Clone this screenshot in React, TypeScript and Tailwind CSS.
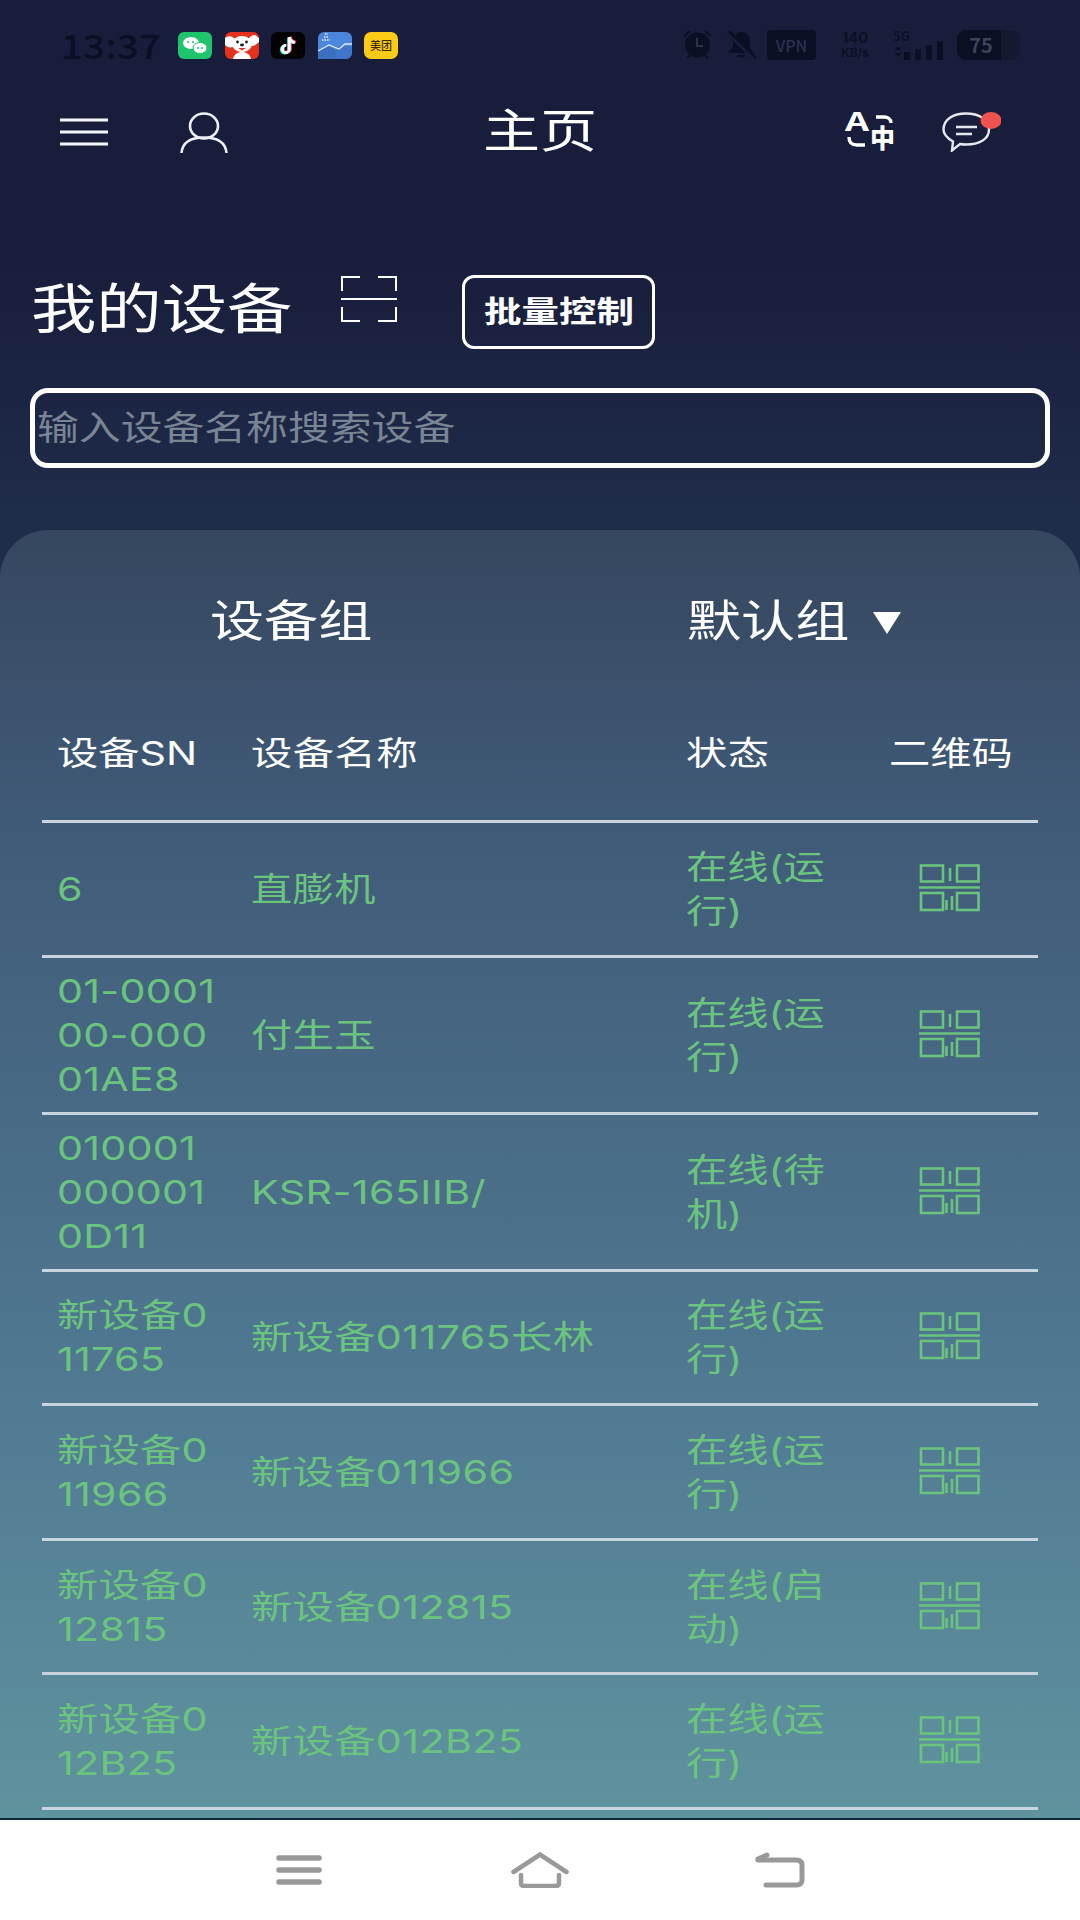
import React from "react";

const FONT = "font-['Noto_Sans_CJK_SC','Noto_Sans',sans-serif]";

function T({ children, className = "scale-x-[1.25]" }: { children: React.ReactNode; className?: string }) {
  return <span className={"inline-block origin-left whitespace-nowrap " + className}>{children}</span>;
}

function Qr() {
  return (
    <svg width="61" height="48" viewBox="0 0 61 48" fill="none" stroke="#6ac47e" strokeWidth="2.600">
      <rect x="2" y="1.500" width="22" height="16" />
      <path d="M31 4v13" />
      <rect x="38" y="1.500" width="21.500" height="16" />
      <path d="M0 23.500h61" />
      <rect x="2" y="29" width="22" height="17" />
      <path d="M27.500 36v10M33 32v14" />
      <rect x="38" y="29" width="21.500" height="17" />
    </svg>
  );
}

const rows: { sn: string[]; name: string; st: string[] }[] = [
  { sn: ["6"], name: "直膨机", st: ["在线(运", "行)"] },
  { sn: ["01-0001", "00-000", "01AE8"], name: "付生玉", st: ["在线(运", "行)"] },
  { sn: ["010001", "000001", "0D11"], name: "KSR-165IIB/", st: ["在线(待", "机)"] },
  { sn: ["新设备0", "11765"], name: "新设备011765长林", st: ["在线(运", "行)"] },
  { sn: ["新设备0", "11966"], name: "新设备011966", st: ["在线(运", "行)"] },
  { sn: ["新设备0", "12815"], name: "新设备012815", st: ["在线(启", "动)"] },
  { sn: ["新设备0", "12B25"], name: "新设备012B25", st: ["在线(运", "行)"] },
];

function Lines({ lines, className }: { lines: string[]; className?: string }) {
  return (
    <div className="flex flex-col">
      {lines.map((l, i) => (
        <div key={i} className="h-[44px]">
          <T className={className}>{l}</T>
        </div>
      ))}
    </div>
  );
}

function StatusBar() {
  return (
    <div className="flex h-[90px] items-center pl-[61px] pr-[60px] text-[#0b0f24]">
      <div className="w-[117px] text-[34px] font-medium leading-none">
        <T className="scale-x-[1.14] text-[#0b0f24]">13:37</T>
      </div>
      <div className="flex gap-[12.5px]">
        <svg width="34" height="27" viewBox="0 0 34 27">
          <rect width="34" height="27" rx="6" fill="#1fc46c" />
          <ellipse cx="13" cy="11" rx="8" ry="6" fill="#fff" />
          <ellipse cx="22" cy="16" rx="7" ry="5.500" fill="#fff" stroke="#1fc46c" />
          <circle cx="10" cy="10" r="1" fill="#1fc46c" />
          <circle cx="15" cy="10" r="1" fill="#1fc46c" />
          <circle cx="20" cy="16" r="1" fill="#1fc46c" />
          <circle cx="24" cy="16" r="1" fill="#1fc46c" />
        </svg>
        <svg width="34" height="27" viewBox="0 0 34 27">
          <rect width="34" height="27" rx="6" fill="#e5321f" />
          <path d="M0 6c4-3 8-2 10 2l-2 7c-3 1-6 0-8-2z" fill="#fff" />
          <path d="M30 3c-3 0-6 2-7 5l3 6c3 0 6-2 8-4V6z" fill="#fff" />
          <ellipse cx="17" cy="12" rx="10" ry="8" fill="#fff" />
          <path d="M8 27c1-5 5-7 9-7s8 2 9 7z" fill="#fff" />
          <circle cx="12.500" cy="10" r="1.400" fill="#222" />
          <circle cx="21.500" cy="10" r="1.400" fill="#222" />
          <ellipse cx="17" cy="13" rx="2" ry="1.400" fill="#222" />
          <path d="M13 16h8l-4 2.500z" fill="#e5321f" />
        </svg>
        <svg width="34" height="27" viewBox="0 0 34 27">
          <rect width="34" height="27" rx="6" fill="#020204" />
          <path d="M18.500 5v12a3.600 3.600 0 1 1-3.600-3.600M18.500 5c.4 3 2.500 5 5.500 5.300" fill="none" stroke="#25f4ee" strokeWidth="2.800" transform="translate(-1 .6)" />
          <path d="M18.500 5v12a3.600 3.600 0 1 1-3.600-3.600M18.500 5c.4 3 2.500 5 5.500 5.300" fill="none" stroke="#fe2c55" strokeWidth="2.800" transform="translate(1 -.2)" />
          <path d="M18.500 5v12a3.600 3.600 0 1 1-3.600-3.600M18.500 5c.4 3 2.500 5 5.500 5.300" fill="none" stroke="#fff" strokeWidth="2.800" />
        </svg>
        <svg width="34" height="27" viewBox="0 0 34 27">
          <rect width="34" height="27" rx="6" fill="#4a86dc" />
          <path d="M0 27V19l11-5 7 4V27z" fill="#3c6fc0" />
          <path d="M18 18l4-4 12 0V21a6 6 0 0 1-6 6H18z" fill="#3c6fc0" opacity=".7" />
          <path d="M0 18l11-6 10 4 6-5 7 0" transform="translate(0 1)" fill="none" stroke="#dce9fa" strokeWidth="1.300" />
          <path d="M4 8h8M6 5h5M7 2h3" stroke="#e8f0fb" strokeWidth="1.500" strokeDasharray="1.500 1" />
        </svg>
        <div className="flex h-[27px] w-[34px] items-center justify-center rounded-[7px] bg-[#fdcb17] text-[11px] font-medium leading-none text-[#3a2c00]">
          美团
        </div>
      </div>
      <div className="ml-auto flex items-center">
        <svg width="33" height="30" viewBox="0 0 33 30" className="mr-[12px]">
          <circle cx="16.500" cy="15" r="12.500" fill="#0b0f24" />
          <path d="M3 6l6-5M30 6l-6-5M6 28l3-3M27 28l-3-3" stroke="#0b0f24" strokeWidth="2" />
          <path d="M16 8v8h6" stroke="#2a2f4a" strokeWidth="2" fill="none" />
        </svg>
        <svg width="31" height="30" viewBox="0 0 31 30" className="mr-[10px]">
          <path d="M15 2c6 0 9 4 9 9v7l4 5H2l5-6v-6c0-5 3-9 8-9z" fill="#0b0f24" />
          <path d="M11 26h8" stroke="#0b0f24" strokeWidth="2.500" />
          <path d="M2 2l27 27" stroke="#181d3b" strokeWidth="5" />
          <path d="M3 1l27 27" stroke="#0b0f24" strokeWidth="2.500" />
        </svg>
        <div className="mr-[18px] flex h-[30px] w-[49px] items-center justify-center rounded-[4px] bg-[#0b0f24] text-[16px] font-medium leading-none text-[#2b3150]">
          VPN
        </div>
        <div className="mr-[17px] flex w-[42px] flex-col items-center font-['Inter',sans-serif] font-semibold leading-none text-[#0b0f24]">
          <span className="text-[15px] leading-[16px]">140</span>
          <span className="text-[12px] leading-[14px]">KB/s</span>
        </div>
        <div className="mr-[11px] flex w-[53px] flex-col">
          <span className="text-[13px] font-bold leading-[13px]">5G</span>
          <svg width="53" height="20" viewBox="0 0 53 20" className="-mt-[1px]">
            <path d="M2 9l3-4 3 4zM2 12l3 4 3-4z" fill="#0b0f24" />
            <rect x="11" y="11" width="6" height="8" rx="1" fill="#0b0f24" />
            <rect x="22" y="8" width="6" height="11" rx="1" fill="#0b0f24" />
            <rect x="33" y="4" width="6" height="15" rx="1" fill="#0b0f24" />
            <rect x="44" y="0" width="6" height="19" rx="1" fill="#0b0f24" />
          </svg>
        </div>
        <div className="flex h-[30px] w-[63px] overflow-hidden rounded-[9px] bg-[#15192f]">
          <div className="flex w-[44px] items-center justify-center bg-[#0b0f24] pl-[4px] text-[20px] font-semibold leading-none text-[#3d4257]">
            75
          </div>
        </div>
      </div>
    </div>
  );
}

function Header() {
  return (
    <div className="flex h-[84px] items-center pl-[60px] pr-[79px]">
      <div className="flex flex-1 items-center gap-[72px]">
        <svg width="48" height="28" viewBox="0 0 48 28" stroke="#f4f5f8" strokeWidth="3">
          <path d="M0 2h48M0 14h48M0 26h48" />
        </svg>
        <svg width="48" height="41" viewBox="0 0 48 41" fill="none" stroke="#eef0f5" strokeWidth="2.600">
          <ellipse cx="24" cy="14" rx="14" ry="12.500" />
          <path d="M1.500 41c1-11 10-15.500 22.500-15.500S45.500 30 46.500 41" />
        </svg>
      </div>
      <div className="w-[140px] pb-[10px] pl-[22px] text-[46px] leading-none text-white">
        <T className="scale-x-[1.24]">主页</T>
      </div>
      <div className="flex flex-1 items-center justify-end gap-[47px]">
        <svg width="50" height="40" viewBox="0 0 50 40" fill="none" className="overflow-visible">
          <text x="0" y="19" fontSize="26" fontWeight="700" fill="#fff" fontFamily="Noto Sans CJK SC" textLength="24" lengthAdjust="spacingAndGlyphs">A</text>
          <text x="25" y="36" fontSize="26" fontWeight="900" fill="#fff" fontFamily="Noto Sans CJK SC" textLength="25" lengthAdjust="spacingAndGlyphs">中</text>
          <path d="M31 5h8c4 0 7 2 7 6" stroke="#fff" strokeWidth="3.400" />
          <path d="M20 33h-8c-5 0-8-2-8-8" stroke="#fff" strokeWidth="3.400" />
        </svg>
        <svg width="59" height="40" viewBox="0 0 59 40" fill="none">
          <path d="M24 1.500c13 0 23 6 23 16s-10 15-23 15c-2 0-4 0-6-.5L10 38.500l1-9C5 26 1.500 22 1.500 17.500 1.500 7.500 11 1.500 24 1.500z" stroke="#e6e8ee" strokeWidth="2.400" />
          <path d="M14 15h21M14 22h16" stroke="#e6e8ee" strokeWidth="2.600" />
          <ellipse cx="49" cy="8.500" rx="10.500" ry="8.500" fill="#ef5350" />
        </svg>
      </div>
    </div>
  );
}

export default function App() {
  return (
    <div className={"flex h-[1920px] w-[1080px] flex-col overflow-hidden bg-[linear-gradient(180deg,#181d3b_0px,#181d3b_250px,#1f2d4b_530px)] " + FONT}>
      <StatusBar />
      <Header />
      <div className="mt-[101px] flex h-[74px] items-start pl-[31px]">
        <div className="w-[310px] pb-[4px] text-[54px] leading-[62px] text-white">
          <T className="scale-x-[1.21]">我的设备</T>
        </div>
        <svg width="56" height="46" viewBox="0 0 56 46" fill="none" stroke="#fff" strokeWidth="2" className="mt-[1px]">
          <path d="M19 1H1v14M37 1h18v14M0 23h56M19 45H1V31M37 45h18V31" />
        </svg>
        <div className="ml-[65px] flex h-[74px] w-[193px] items-center rounded-[12px] border-[3px] border-white pb-[7px] pl-[19px] text-[30px] font-bold leading-none text-white">
          <T>批量控制</T>
        </div>
      </div>
      <div className="mx-[30px] mt-[39px] flex h-[80px] items-center rounded-[18px] border-[5px] border-white pb-[4px] pl-[2px] text-[34px] leading-none text-[#7a8594]">
        <T className="scale-x-[1.23]">输入设备名称搜索设备</T>
      </div>
      <div className="mt-[62px] flex min-h-0 flex-1 flex-col overflow-hidden rounded-t-[48px] bg-[linear-gradient(180deg,#36465f_0%,#3f5a77_22%,#517a93_68%,#5f939e_100%)]">
        <div className="flex h-[176px] shrink-0 items-center text-[44px] leading-none text-white">
          <div className="w-[687px] pl-[210px]">
            <T className="scale-x-[1.23]">设备组</T>
          </div>
          <div className="w-[186px]">
            <T className="scale-x-[1.23]">默认组</T>
          </div>
          <svg width="28" height="22" viewBox="0 0 28 22" className="mt-[10px]">
            <path d="M0 0h28L14 22z" fill="#fff" />
          </svg>
        </div>
        <div className="mx-[42px] flex h-[114px] shrink-0 items-start pt-[23px] text-[33px] leading-[44px] text-white">
          <div className="w-[209px] pl-[15px]"><T className="scale-x-[1.25] font-['Inter','Noto_Sans_CJK_SC',sans-serif]">设备SN</T></div>
          <div className="w-[435px]"><T className="scale-x-[1.25] tracking-[0.4px]">设备名称</T></div>
          <div className="w-[174px]"><T className="scale-x-[1.25] tracking-[0.4px]">状态</T></div>
          <div className="flex-1 pl-[29px]"><T>二维码</T></div>
        </div>
        <div className="mx-[42px] font-['Inter','Noto_Sans_CJK_SC',sans-serif] text-[33px] leading-[44px] text-[#6ac47e]">
          {rows.map((r, i) => (
            <div key={i} className="flex min-h-[134.6px] items-center border-t-[3px] border-[#c8d5e1] py-[11px]">
              <div className="w-[209px] pl-[15px]"><Lines lines={r.sn} className="scale-x-[1.25] tracking-[0.2px]" /></div>
              <div className="w-[435px]"><T className="scale-x-[1.25] tracking-[0.3px]">{r.name}</T></div>
              <div className="w-[175px]"><Lines lines={r.st} className="scale-x-[1.25]" /></div>
              <div className="flex flex-1 justify-center pb-[2px]"><Qr /></div>
            </div>
          ))}
          <div className="border-t-[3px] border-[#c8d5e1]" />
        </div>
      </div>
      <div className="flex h-[102px] shrink-0 items-center justify-center border-t-[2px] border-[#0e2a3a] bg-white">
        <svg width="46" height="30" viewBox="0 0 46 30" stroke="#999" strokeWidth="5.500" strokeLinecap="round" className="mr-[189px]">
          <path d="M3 3h40M3 15h40M3 27h40" />
        </svg>
        <svg width="58" height="36" viewBox="0 0 58 36" fill="none" stroke="#999" strokeWidth="4.500" strokeLinecap="round" className="mr-[186px]">
          <path d="M2.500 20L29 2.500 55.500 20" />
          <path d="M10 23v8c0 2 1 3 3 3h32c2 0 3-1 3-3v-8" />
        </svg>
        <svg width="50" height="36" viewBox="0 0 50 36" fill="none" stroke="#999" strokeWidth="5" strokeLinecap="round">
          <path d="M3 8h38c4 0 6 2 6 5v15c0 3-2 5-5 5H11" />
          <path d="M3 7l9-4" />
        </svg>
      </div>
    </div>
  );
}
